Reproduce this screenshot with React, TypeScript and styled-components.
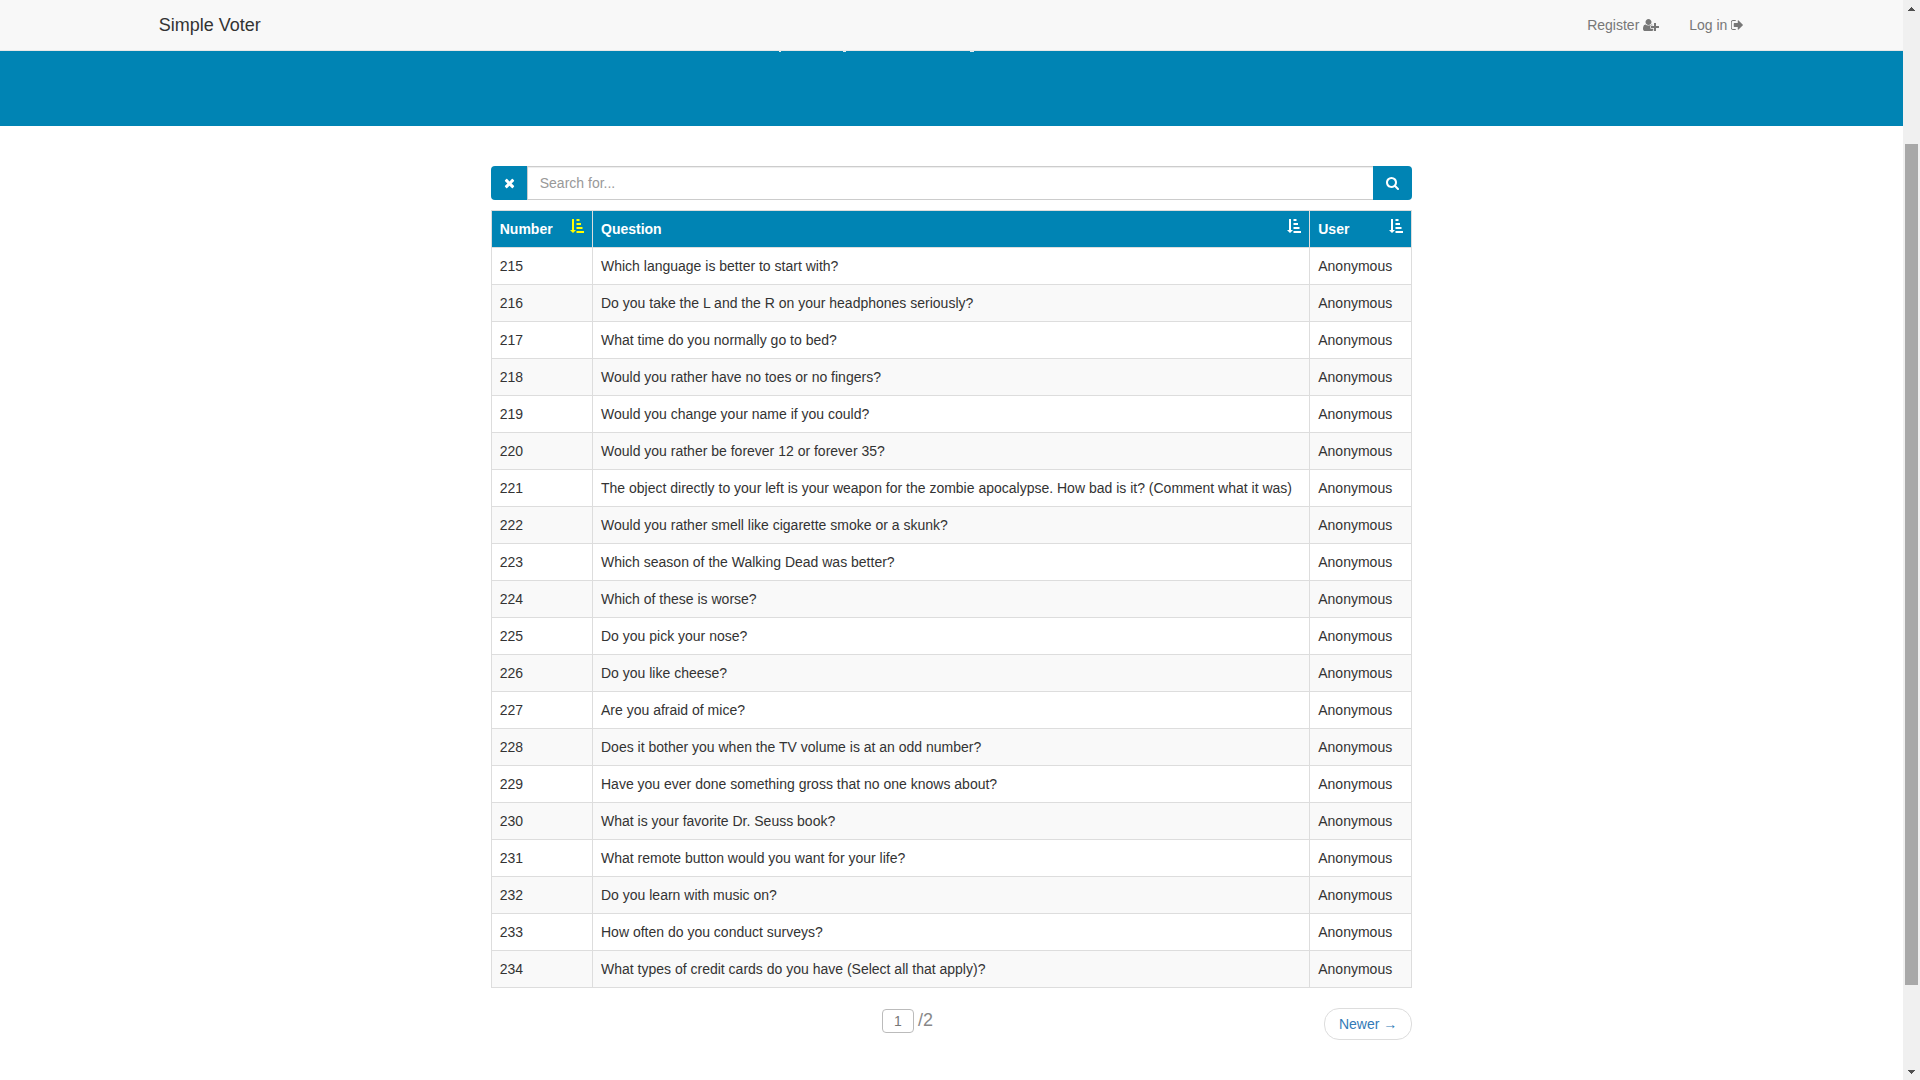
import React, { useState } from "react";
import styled, { createGlobalStyle } from "styled-components";

const BLUE = "#0084b4";
const SANS = '"Liberation Sans", Arial, Helvetica, sans-serif';

const GlobalStyle = createGlobalStyle`
  *, *::before, *::after { box-sizing: border-box; }
  html { scrollbar-width: none; }
  body {
    margin: 0;
    background: #fff;
    color: #333;
    font: 14px/20px ${SANS};
  }
  button, input { font: inherit; }
`;

const Window = styled.div`
  display: grid;
  grid-template-columns: minmax(0, 1fr) 17px;
  height: 100vh;
  overflow: hidden;
`;

const Page = styled.div`
  min-width: 0;
`;

const Navbar = styled.nav`
  height: 51px;
  background: #f8f8f8;
  border-bottom: 1px solid #e7e7e7;
`;

const NavInner = styled.div`
  display: flex;
  justify-content: space-between;
  width: 85%;
  margin: 0 auto;
`;

const Brand = styled.a`
  padding: 15px 16px;
  color: #333;
  font-size: 18px;
  text-decoration: none;
`;

const NavLinks = styled.div`
  display: flex;
`;

const NavLink = styled.a`
  padding: 15px;
  color: #777;
  text-decoration: none;
`;

const Glyph = styled.svg<{ $wide?: boolean }>`
  display: inline-block;
  width: ${(p) => (p.$wide ? 16 : 14)}px;
  height: 14px;
  fill: currentColor;
  vertical-align: -2px;
`;

const Hero = styled.header`
  display: flex;
  justify-content: center;
  height: 75px;
  background: ${BLUE};
`;

const Main = styled.main`
  width: 50%;
  margin: 0 auto;
  padding: 40px 15px;
`;

const SearchBar = styled.form`
  display: flex;
  height: 34px;
  margin-bottom: 10px;
`;

const SearchButton = styled.button<{ $side: "left" | "right" }>`
  flex: none;
  width: ${(p) => (p.$side === "left" ? 36 : 39)}px;
  padding: 0;
  border: 0;
  border-radius: ${(p) => (p.$side === "left" ? "4px 0 0 4px" : "0 4px 4px 0")};
  background: ${BLUE};
  color: #fff;
  cursor: pointer;
`;

const SearchInput = styled.input`
  flex: 1;
  min-width: 0;
  padding: 6px 12px;
  border: 1px solid #ccc;
  border-right: 0;
  border-radius: 0;
  box-shadow: inset 0 1px 1px rgba(0, 0, 0, 0.075);
  color: #555;
  outline: 0;
  &::placeholder { color: #999; opacity: 1; }
`;

const Table = styled.table`
  width: 100%;
  border: 1px solid #ddd;
  border-collapse: collapse;
  table-layout: fixed;
`;

const Column = styled.col<{ $width?: string }>`
  width: ${(p) => p.$width ?? "auto"};
`;

const HeadCell = styled.th`
  padding: 8px;
  border: 1px solid #ddd;
  background: ${BLUE};
  color: #fff;
  text-align: left;
`;

const HeadContent = styled.div`
  display: flex;
  justify-content: space-between;
  align-items: flex-start;
  height: 20px;
`;

const SortButton = styled.button<{ $active: boolean }>`
  display: flex;
  padding: 0;
  border: 0;
  background: none;
  color: ${(p) => (p.$active ? "#ff0" : "#fff")};
  cursor: pointer;
`;

const Row = styled.tr`
  &:nth-child(even) { background: #f9f9f9; }
`;

const Cell = styled.td`
  padding: 8px;
  border: 1px solid #ddd;
`;

const Pager = styled.nav`
  display: grid;
  grid-template-columns: 1fr auto 1fr;
  align-items: start;
  padding-top: 20px;
`;

const PageCount = styled.label`
  display: flex;
  gap: 4px;
  color: #888;
  font-size: 18px;
  line-height: 24px;
`;

const PagerCenter = styled.div`
  display: flex;
  grid-column: 1 / 4;
  grid-row: 1;
  justify-content: center;
  padding-right: 88px;
`;

const PageInput = styled.input`
  width: 32px;
  height: 24px;
  margin-top: 1px;
  padding: 0;
  border: 1px solid #bbb;
  border-radius: 4px;
  background: #fff;
  color: #777;
  font-size: 14px;
  text-align: center;
`;

const NextLink = styled.a`
  grid-column: 3;
  grid-row: 1;
  justify-self: end;
  padding: 5px 14px;
  border: 1px solid #ddd;
  border-radius: 15px;
  color: #337ab7;
  text-decoration: none;
`;

const Scrollbar = styled.div`
  display: flex;
  flex-direction: column;
  justify-content: space-between;
  align-items: center;
  padding: 7px 0 6px;
  background: #f0f0f0;
`;

const ScrollTrack = styled.div`
  display: grid;
  grid-template-rows: 133fr 841fr 85fr;
  flex: 1;
  width: 13px;
`;

const ScrollThumb = styled.div`
  grid-row: 2;
  background: #a8a8a8;
`;

const ScrollArrow = styled.svg`
  flex: none;
  width: 7px;
  height: 4px;
  fill: #505050;
`;

const UserPlusIcon = () => (
  <Glyph $wide viewBox="0 0 2048 1792" aria-hidden="true">
    <path d="M704 896q-159 0-271.5-112.5T320 512t112.5-271.5T704 128t271.5 112.5T1088 512 975.5 783.5 704 896zm960 128h352q13 0 22.5 9.5t9.5 22.5v192q0 13-9.5 22.5t-22.5 9.5h-352v352q0 13-9.5 22.5t-22.5 9.5h-192q-13 0-22.5-9.5t-9.5-22.5v-352h-352q-13 0-22.5-9.5t-9.5-22.5v-192q0-13 9.5-22.5t22.5-9.5h352v-352q0-13 9.5-22.5t22.5-9.5h192q13 0 22.5 9.5t9.5 22.5v352zm-736 224q0 52 38 90t90 38h256v238q-68 50-171 50H267q-121 0-194-69T0 1405q0-53 3.5-103.5t14-109T44 1084t43-97.5 62-81 85.5-53.5T346 832q19 0 39 17 79 61 154.5 91.5T704 971t164.5-30.5T1023 849q20-17 39-17 132 0 217 96h-223q-52 0-90 38t-38 90v192z" />
  </Glyph>
);

const SignInIcon = () => (
  <Glyph viewBox="96 0 1792 1792" aria-hidden="true">
    <path d="M704 1440q0 4 1 20t.5 26.5-3 23.5-10 19.5-20.5 6.5h-320q-119 0-203.5-84.5t-84.5-203.5v-704q0-119 84.5-203.5t203.5-84.5h320q13 0 22.5 9.5t9.5 22.5q0 4 1 20t.5 26.5-3 23.5-10 19.5-20.5 6.5h-320q-66 0-113 47t-47 113v704q0 66 47 113t113 47h312l11.5 1 11.5 3 8 5.5 7 9 2 13.5zm928-544q0 26-19 45l-544 544q-19 19-45 19t-45-19-19-45v-288h-448q-26 0-45-19t-19-45v-384q0-26 19-45t45-19h448v-288q0-26 19-45t45-19 45 19l544 544q19 19 19 45z" />
  </Glyph>
);

const TimesIcon = () => (
  <Glyph viewBox="-64 0 1792 1792" aria-hidden="true">
    <path d="M1490 1322q0 40-28 68l-136 136q-28 28-68 28t-68-28l-294-294-294 294q-28 28-68 28t-68-28l-136-136q-28-28-28-68t28-68l294-294-294-294q-28-28-28-68t28-68l136-136q28-28 68-28t68 28l294 294 294-294q28-28 68-28t68 28l136 136q28 28 28 68t-28 68l-294 294 294 294q28 28 28 68z" />
  </Glyph>
);

const SearchIcon = () => (
  <Glyph viewBox="64 0 1792 1792" aria-hidden="true">
    <path d="M1216 832q0-185-131.5-316.5t-316.5-131.5-316.5 131.5-131.5 316.5 131.5 316.5 316.5 131.5 316.5-131.5 131.5-316.5zm512 832q0 52-38 90t-90 38q-54 0-90-38l-343-342q-179 124-399 124-143 0-273.5-55.5t-225-150-150-225-55.5-273.5 55.5-273.5 150-225 225-150 273.5-55.5 273.5 55.5 225 150 150 225 55.5 273.5q0 220-124 399l343 343q37 37 37 90z" />
  </Glyph>
);

const SortIcon = () => (
  <Glyph viewBox="0 0 14 14" aria-hidden="true">
    <path d="M2 0h2v11h2l-3 3-3-3h2zM6.5 0h3v2h-3zM6.5 4h4.5v2H6.5zM6.5 8h6v2h-6zM6.5 12H14v2H6.5z" />
  </Glyph>
);

const columns = ["Number", "Question", "User"];

const questions = [
  "Which language is better to start with?",
  "Do you take the L and the R on your headphones seriously?",
  "What time do you normally go to bed?",
  "Would you rather have no toes or no fingers?",
  "Would you change your name if you could?",
  "Would you rather be forever 12 or forever 35?",
  "The object directly to your left is your weapon for the zombie apocalypse. How bad is it? (Comment what it was)",
  "Would you rather smell like cigarette smoke or a skunk?",
  "Which season of the Walking Dead was better?",
  "Which of these is worse?",
  "Do you pick your nose?",
  "Do you like cheese?",
  "Are you afraid of mice?",
  "Does it bother you when the TV volume is at an odd number?",
  "Have you ever done something gross that no one knows about?",
  "What is your favorite Dr. Seuss book?",
  "What remote button would you want for your life?",
  "Do you learn with music on?",
  "How often do you conduct surveys?",
  "What types of credit cards do you have (Select all that apply)?",
];

const rows = questions.map((question, i) => ({
  number: 215 + i,
  question,
  user: "Anonymous",
}));

export default function App() {
  const [query, setQuery] = useState("");
  const [page, setPage] = useState("1");
  const [sortBy, setSortBy] = useState("Number");

  return (
    <>
      <GlobalStyle />
      <Window>
        <Page>
          <Navbar>
            <NavInner>
              <Brand href="#">Simple Voter</Brand>
              <NavLinks>
                <NavLink href="#register">Register <UserPlusIcon /></NavLink>
                <NavLink href="#login">Log in <SignInIcon /></NavLink>
              </NavLinks>
            </NavInner>
          </Navbar>
          <Hero>
            <svg width="346" height="1" fill="#dceef5" aria-hidden="true">
              <path d="M0 0h2v1H0zM64 0h3v1h-3zM191 0h4v1h-4z" />
            </svg>
          </Hero>
          <Main>
            <SearchBar onSubmit={(e) => e.preventDefault()}>
              <SearchButton $side="left" type="button" aria-label="Clear" onClick={() => setQuery("")}>
                <TimesIcon />
              </SearchButton>
              <SearchInput
                aria-label="Search"
                placeholder="Search for..."
                value={query}
                onChange={(e) => setQuery(e.target.value)}
              />
              <SearchButton $side="right" type="submit" aria-label="Search">
                <SearchIcon />
              </SearchButton>
            </SearchBar>
            <Table>
              <colgroup>
                <Column $width="11%" />
                <Column />
                <Column $width="102px" />
              </colgroup>
              <thead>
                <tr>
                  {columns.map((name) => (
                    <HeadCell key={name} scope="col">
                      <HeadContent>
                        {name}
                        <SortButton
                          type="button"
                          aria-label={`Sort by ${name}`}
                          $active={sortBy === name}
                          onClick={() => setSortBy(name)}
                        >
                          <SortIcon />
                        </SortButton>
                      </HeadContent>
                    </HeadCell>
                  ))}
                </tr>
              </thead>
              <tbody>
                {rows.map((row) => (
                  <Row key={row.number}>
                    <Cell>{row.number}</Cell>
                    <Cell>{row.question}</Cell>
                    <Cell>{row.user}</Cell>
                  </Row>
                ))}
              </tbody>
            </Table>
            <Pager>
              <PagerCenter>
                <PageCount>
                  <PageInput aria-label="Page" value={page} onChange={(e) => setPage(e.target.value)} />
                  /2
                </PageCount>
              </PagerCenter>
              <NextLink href="#newer">Newer →</NextLink>
            </Pager>
          </Main>
        </Page>
        <Scrollbar aria-hidden="true">
          <ScrollArrow viewBox="0 0 7 4"><path d="M3 0h1v1h1v1h1v1h1v1H0V3h1V2h1V1h1z" /></ScrollArrow>
          <ScrollTrack><ScrollThumb /></ScrollTrack>
          <ScrollArrow viewBox="0 0 7 4"><path d="M0 0h7v1H6v1H5v1H4v1H3V3H2V2H1V1H0z" /></ScrollArrow>
        </Scrollbar>
      </Window>
    </>
  );
}
